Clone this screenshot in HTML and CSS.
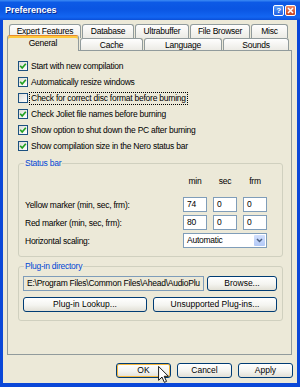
FILE: index.html
```html
<!DOCTYPE html>
<html lang="en">
<head>
  <meta charset="UTF-8">
  <title>Preferences</title>
  <link rel="stylesheet" href="styles.css">
</head>
<body>
  <div class="window">
    <div class="titlebar">
      <span class="title">Preferences</span>
      <div class="title-buttons">
        <span class="tbtn help">?</span>
        <span class="tbtn close">
          <svg width="7" height="7" viewBox="0 0 7 7"><path d="M1 1 L6 6 M6 1 L1 6" stroke="#fff" stroke-width="1.5"/></svg>
        </span>
      </div>
    </div>

    <div class="client">
      <div class="tab-row back">
        <div class="tab w-expert">Expert Features</div>
        <div class="tab w-database">Database</div>
        <div class="tab w-ultra">Ultrabuffer</div>
        <div class="tab w-browser">File Browser</div>
        <div class="tab w-misc">Misc</div>
      </div>
      <div class="tab-row front">
        <div class="tab active w-general">General</div>
        <div class="tab w-cache">Cache</div>
        <div class="tab w-language">Language</div>
        <div class="tab w-sounds">Sounds</div>
      </div>

      <div class="panel">
        <div class="check-row">
          <span class="box"><svg width="8" height="8" viewBox="0 0 8 8"><path d="M1.2 3.8 L3.2 6 L6.8 1.8" fill="none" stroke="#21a121" stroke-width="1.7"/></svg></span>
          <span class="label">Start with new compilation</span>
        </div>
        <div class="check-row">
          <span class="box"><svg width="8" height="8" viewBox="0 0 8 8"><path d="M1.2 3.8 L3.2 6 L6.8 1.8" fill="none" stroke="#21a121" stroke-width="1.7"/></svg></span>
          <span class="label">Automatically resize windows</span>
        </div>
        <div class="check-row">
          <span class="box"></span>
          <span class="label focus">Check for correct disc format before burning</span>
        </div>
        <div class="check-row">
          <span class="box"><svg width="8" height="8" viewBox="0 0 8 8"><path d="M1.2 3.8 L3.2 6 L6.8 1.8" fill="none" stroke="#21a121" stroke-width="1.7"/></svg></span>
          <span class="label">Check Joliet file names before burning</span>
        </div>
        <div class="check-row">
          <span class="box"><svg width="8" height="8" viewBox="0 0 8 8"><path d="M1.2 3.8 L3.2 6 L6.8 1.8" fill="none" stroke="#21a121" stroke-width="1.7"/></svg></span>
          <span class="label">Show option to shut down the PC after burning</span>
        </div>
        <div class="check-row">
          <span class="box"><svg width="8" height="8" viewBox="0 0 8 8"><path d="M1.2 3.8 L3.2 6 L6.8 1.8" fill="none" stroke="#21a121" stroke-width="1.7"/></svg></span>
          <span class="label">Show compilation size in the Nero status bar</span>
        </div>

        <fieldset class="group status">
          <legend>Status bar</legend>
          <div class="marker-grid">
            <span></span>
            <span class="col-head">min</span>
            <span class="col-head">sec</span>
            <span class="col-head">frm</span>

            <span>Yellow marker (min, sec, frm):</span>
            <span class="field">74</span>
            <span class="field">0</span>
            <span class="field">0</span>

            <span>Red marker (min, sec, frm):</span>
            <span class="field">80</span>
            <span class="field">0</span>
            <span class="field">0</span>

            <span>Horizontal scaling:</span>
            <span class="field select">
              <span>Automatic</span>
              <span class="select-arrow">
                <svg width="7" height="5" viewBox="0 0 7 5"><path d="M1 1 L3.5 3.5 L6 1" fill="none" stroke="#4d6185" stroke-width="1.5"/></svg>
              </span>
            </span>
          </div>
        </fieldset>

        <fieldset class="group plugins">
          <legend>Plug-in directory</legend>
          <div class="path-row">
            <span class="field path">E:\Program Files\Common Files\Ahead\AudioPlu</span>
            <button class="btn browse">Browse...</button>
          </div>
          <div class="btn-row">
            <button class="btn">Plug-in Lookup...</button>
            <button class="btn">Unsupported Plug-ins...</button>
          </div>
        </fieldset>
      </div>

      <div class="dialog-buttons">
        <button class="btn default">OK</button>
        <button class="btn">Cancel</button>
        <button class="btn">Apply</button>
      </div>
    </div>

    <svg class="cursor" width="11" height="17" viewBox="0 0 12 19">
      <path d="M0.5 0.5 L0.5 16 L4.3 12.4 L7 18.3 L9.4 17.2 L6.8 11.5 L11.5 11.5 Z" fill="#fff" stroke="#000" stroke-width="1"/>
    </svg>
  </div>
</body>
</html>
```

FILE: styles.css
```css
body {
  margin: 0;
  font-family: "Liberation Sans", Arial, sans-serif;
  font-size: 8.5px;
  letter-spacing: -0.25px;
  color: #000;
  background: #ece9d8;
}

.window {
  position: relative;
  width: 300px;
  height: 387px;
  display: flex;
  flex-direction: column;
}

/* title bar */
.titlebar {
  height: 20px;
  flex-shrink: 0;
  display: flex;
  align-items: center;
  justify-content: space-between;
  padding: 0 4px 0 5px;
  background: linear-gradient(to bottom, #3d8cf5 0%, #0d5ae6 12%, #0a55e2 45%, #1366f2 85%, #0a4fd9 100%);
}

.title {
  color: #fff;
  font-weight: bold;
  font-size: 9px;
  letter-spacing: 0;
  text-shadow: 1px 1px #0c2a8a;
}

.title-buttons {
  display: flex;
  gap: 1px;
}

.tbtn {
  width: 11px;
  height: 11px;
  box-sizing: border-box;
  border: 1px solid #fff;
  border-radius: 2px;
  display: flex;
  align-items: center;
  justify-content: center;
  color: #fff;
  font-weight: bold;
  font-size: 8px;
  line-height: 9px;
}

.help {
  background: linear-gradient(to bottom, #5a9cf8, #2260e3);
}

.close {
  background: linear-gradient(to bottom, #ec8a68, #c8421c);
}

/* client area */
.client {
  flex: 1;
  display: flex;
  flex-direction: column;
  padding: 4px 5px 0 4px;
  border: solid #0a47d8;
  border-width: 0 3px 4px 3px;
  background: #ece9d8;
}

/* tabs */
.tab-row {
  display: flex;
  gap: 1px;
  margin-left: 2px;
}

.tab-row.back {
  height: 14px;
}

.tab-row.front {
  height: 12px;
  align-items: flex-end;
}

.tab {
  box-sizing: border-box;
  height: 14px;
  border: 1px solid #919b9c;
  border-bottom: none;
  border-radius: 3px 3px 0 0;
  background: linear-gradient(to bottom, #fefefe, #ecebe5);
  text-align: center;
  line-height: 13px;
  white-space: nowrap;
}

.front .tab {
  height: 12px;
  line-height: 12px;
}

.front .tab.active {
  position: relative;
  z-index: 1;
  height: 16px;
  margin: 0 0 -1px -2px;
  line-height: 14px;
  background: #ece9d8;
  border-top: 1px solid #e68b2c;
  box-shadow: inset 0 2px 0 #ffc83c;
}

.w-expert { width: 72px; }
.w-database { width: 52px; }
.w-ultra { width: 54px; }
.w-browser { width: 60px; }
.w-misc { width: 37px; }
.w-general { width: 72px; }
.w-cache { width: 63px; }
.w-language { width: 78px; }
.w-sounds { width: 66px; }

/* tab page */
.panel {
  height: 305px;
  box-sizing: border-box;
  border: 1px solid #919b9c;
  background: #ece9d8;
  padding: 7px 8px 0 10px;
}

.check-row {
  display: flex;
  align-items: center;
  height: 16px;
}

.box {
  width: 10px;
  height: 10px;
  box-sizing: border-box;
  border: 1px solid #1c5180;
  background: linear-gradient(135deg, #dcdcd7, #fff);
  display: flex;
  align-items: center;
  justify-content: center;
}

.label {
  margin-left: 1px;
  padding: 0 1px;
  border: 1px solid transparent;
  line-height: 11px;
  white-space: nowrap;
}

.label.focus {
  border: 1px dotted #000;
}

/* group boxes */
.group {
  margin: 3px 0 0;
  border: 1px solid #d0d0bf;
  border-radius: 3px;
  min-width: 0;
}

.group legend {
  color: #0046d5;
  padding: 0 1px;
  line-height: 12px;
}

.status {
  padding: 5px 15px 8px 5px;
}

.plugins {
  padding: 4px 5px 8px 4px;
}

.plugins legend {
  margin-left: 1px;
}

.marker-grid {
  display: grid;
  grid-template-columns: 1fr 24px 24px 24px;
  grid-template-rows: 20px 15px 15px 15px;
  column-gap: 6px;
  row-gap: 3px;
  align-items: center;
  padding-left: 1px;
}

.col-head {
  align-self: start;
  text-align: center;
  line-height: 14px;
}

.field {
  box-sizing: border-box;
  height: 15px;
  border: 1px solid #7f9db9;
  background: #fff;
  padding: 0 3px;
  line-height: 13px;
  white-space: nowrap;
}

.select {
  grid-column: 2 / 5;
  display: flex;
  align-items: center;
  justify-content: space-between;
  padding-right: 1px;
}

.select-arrow {
  width: 11px;
  height: 11px;
  border-radius: 1px;
  background: linear-gradient(to bottom, #d2e0fd, #b3c9f7);
  display: flex;
  align-items: center;
  justify-content: center;
}

.path-row {
  display: flex;
  gap: 3px;
}

.field.path {
  flex: 1;
  overflow: hidden;
  background: #ece9d8;
}

.browse {
  width: 70px;
}

.btn-row {
  display: flex;
  gap: 6px;
  margin-top: 6px;
}

.btn-row .btn {
  flex: 1;
}

/* buttons */
.btn {
  box-sizing: border-box;
  height: 15px;
  padding: 0;
  border: 1px solid #003c74;
  border-radius: 3px;
  background: linear-gradient(to bottom, #ffffff 0%, #f4f4f0 55%, #e2e0d6 100%);
  font: inherit;
  line-height: 13px;
  color: #000;
  text-align: center;
  white-space: nowrap;
}

.btn.default {
  box-shadow: inset 0 0 0 1px #f5b73d;
}

.dialog-buttons {
  display: flex;
  justify-content: flex-end;
  gap: 6px;
  margin: 8px -1px 0 0;
}

.dialog-buttons .btn {
  width: 55px;
}

.cursor {
  position: absolute;
  left: 158px;
  top: 366px;
}
```
